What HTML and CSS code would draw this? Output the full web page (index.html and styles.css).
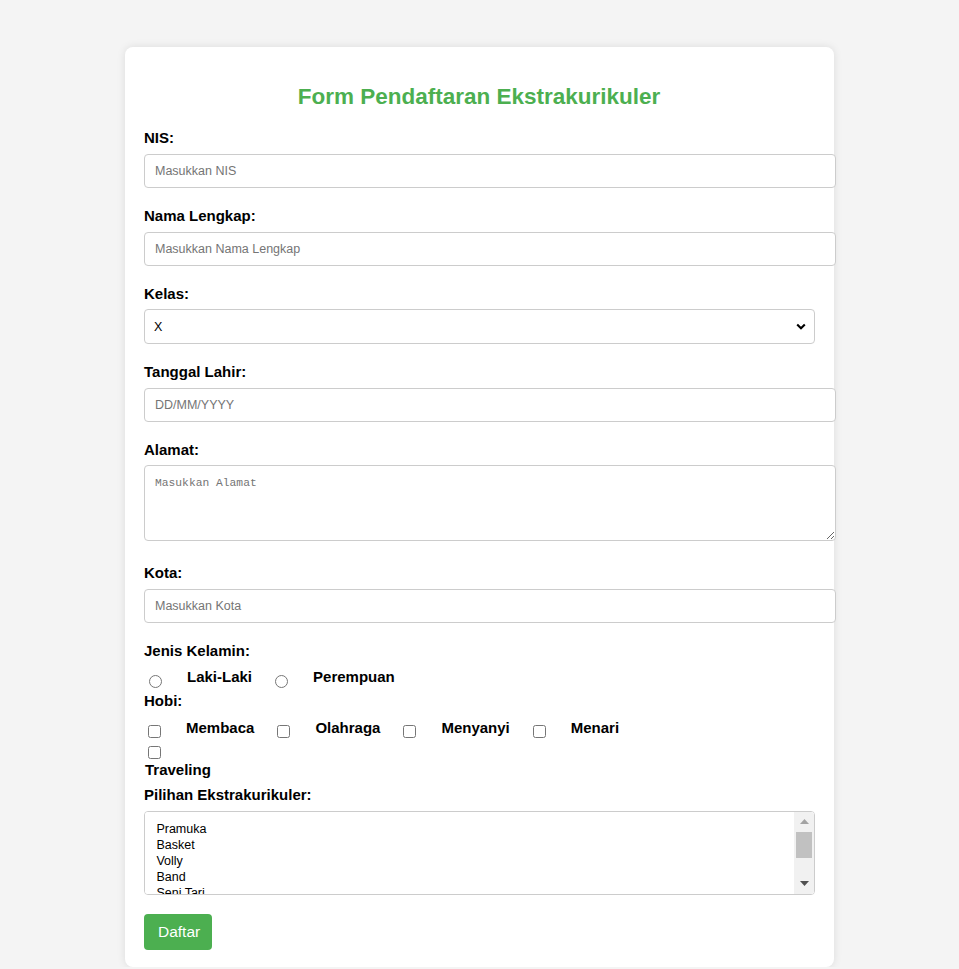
FILE: index.html
```html
<!DOCTYPE html>
<html lang="id">
<head>
<meta charset="utf-8">
<title>Form Pendaftaran Ekstrakurikuler</title>
<link rel="stylesheet" href="styles.css">
</head>
<body>
<div class="container">
  <h2 class="title">Form Pendaftaran Ekstrakurikuler</h2>
  <form class="form">
    <label class="field-label" for="nis">NIS:</label>
    <input class="text-input" type="text" id="nis" placeholder="Masukkan NIS">

    <label class="field-label" for="nama">Nama Lengkap:</label>
    <input class="text-input" type="text" id="nama" placeholder="Masukkan Nama Lengkap">

    <label class="field-label" for="kelas">Kelas:</label>
    <select class="select-input" id="kelas">
      <option>X</option>
      <option>XI</option>
      <option>XII</option>
    </select>

    <label class="field-label" for="tgl">Tanggal Lahir:</label>
    <input class="text-input" type="text" id="tgl" placeholder="DD/MM/YYYY">

    <label class="field-label" for="alamat">Alamat:</label>
    <textarea class="textarea-input" id="alamat" placeholder="Masukkan Alamat"></textarea>

    <label class="field-label" for="kota">Kota:</label>
    <input class="text-input" type="text" id="kota" placeholder="Masukkan Kota">

    <label class="field-label group-label">Jenis Kelamin:</label>
    <div class="choice-row radio-row">
      <input class="radio" type="radio" name="jk" id="jk1"><label class="choice-label" for="jk1">Laki-Laki</label>
      <input class="radio" type="radio" name="jk" id="jk2"><label class="choice-label" for="jk2">Perempuan</label>
    </div>

    <label class="field-label group-label">Hobi:</label>
    <div class="choice-row check-row">
      <input class="check" type="checkbox" id="h1"><label class="choice-label" for="h1">Membaca</label>
      <input class="check" type="checkbox" id="h2"><label class="choice-label" for="h2">Olahraga</label>
      <input class="check" type="checkbox" id="h3"><label class="choice-label" for="h3">Menyanyi</label>
      <input class="check" type="checkbox" id="h4"><label class="choice-label" for="h4">Menari</label>
    </div>
    <div class="choice-row check-row-wrap">
      <input class="check" type="checkbox" id="h5">
    </div>
    <label class="field-label wrap-label" for="h5">Traveling</label>

    <label class="field-label" for="ekskul">Pilihan Ekstrakurikuler:</label>
    <div class="list-wrap">
      <select class="list-input" id="ekskul" multiple size="5">
        <option>Pramuka</option>
        <option>Basket</option>
        <option>Volly</option>
        <option>Band</option>
        <option>Seni Tari</option>
        <option>Paskibra</option>
        <option>PMR</option>
      </select>
      <div class="fake-scrollbar" aria-hidden="true">
        <div class="sb-button">
          <svg class="sb-arrow" viewBox="0 0 9 5" width="9" height="5"><path d="M0 5 L4.5 0 L9 5 Z" fill="#a3a3a3"/></svg>
        </div>
        <div class="sb-track">
          <div class="sb-thumb"></div>
        </div>
        <div class="sb-button">
          <svg class="sb-arrow" viewBox="0 0 9 5" width="9" height="5"><path d="M0 0 L9 0 L4.5 5 Z" fill="#505050"/></svg>
        </div>
      </div>
    </div>

    <button class="submit-btn" type="button">Daftar</button>
  </form>
</div>
</body>
</html>
```

FILE: styles.css
```css
html, body {
  margin: 0;
  padding: 0;
}

body {
  background: #f4f4f4;
  font-family: "Liberation Sans", Arial, sans-serif;
  color: #000;
}

.container {
  width: 670px;
  margin: 47px auto 0;
  padding: 18.75px 20px 17px 19px;
  background: #fff;
  border-radius: 8px;
  box-shadow: 0 0 9px rgba(0, 0, 0, 0.1);
}

.title {
  margin: 18px 0 19.5px;
  text-align: center;
  color: #4caf50;
  font-size: 22.5px;
  font-weight: bold;
  line-height: 25.9px;
}

.form {
  display: block;
}

.field-label {
  display: block;
  font-size: 15px;
  font-weight: bold;
  line-height: 17.25px;
  margin-bottom: 7.5px;
}

.text-input {
  display: block;
  box-sizing: border-box;
  width: 692px;
  height: 34px;
  margin: 0 0 19px;
  padding: 0 10px;
  border: 1px solid #ccc;
  border-radius: 4px;
  font-family: "Liberation Sans", Arial, sans-serif;
  font-size: 12.5px;
  color: #000;
  background: #fff;
}

.text-input::placeholder {
  color: #757575;
}

.select-input {
  display: block;
  box-sizing: border-box;
  width: 671px;
  height: 34.5px;
  margin: 0 0 19px;
  padding: 0 9px;
  border: 1px solid #ccc;
  border-radius: 4px;
  font-family: "Liberation Sans", Arial, sans-serif;
  font-size: 12.5px;
  color: #000;
  -webkit-appearance: none;
  appearance: none;
  background-color: #fff;
  background-image: url("data:image/svg+xml,%3Csvg xmlns='http://www.w3.org/2000/svg' viewBox='0 0 10 7'%3E%3Cpath d='M1.2 1.4 L5 5.2 L8.8 1.4' fill='none' stroke='%23000' stroke-width='2.1'/%3E%3C/svg%3E");
  background-repeat: no-repeat;
  background-size: 10px 7px;
  background-position: right 8px center;
}

.textarea-input {
  display: block;
  box-sizing: border-box;
  width: 692px;
  height: 76px;
  margin: 0 0 22.5px;
  padding: 11px 10px 9px;
  border: 1px solid #ccc;
  border-radius: 4px;
  font-family: "Liberation Mono", monospace;
  font-size: 11.3px;
  line-height: 13px;
  resize: both;
}

.textarea-input::placeholder {
  color: #757575;
}

.choice-row {
  display: flex;
  align-items: flex-start;
}

.radio-row {
  margin-top: -0.5px;
  margin-bottom: 4px;
}

.radio {
  width: 13px;
  height: 13px;
  margin: 9.5px 3px 0 5px;
  flex: none;
}

.choice-label {
  font-size: 15px;
  font-weight: bold;
  line-height: 17.25px;
  margin: 2.5px 18px 0 22px;
}

.group-label {
  margin-bottom: 7.5px;
}

.check {
  width: 13px;
  height: 13px;
  margin: 8px 3px 0 4px;
  flex: none;
}

.check-row .choice-label {
  margin: 2px 19px 0 22px;
}

.check-row-wrap .check {
  margin-top: 8px;
}

.wrap-label {
  margin-top: 2px;
  margin-left: 1px;
  margin-bottom: 7.5px;
}

.list-wrap {
  position: relative;
  width: 671px;
  margin: 0 0 19.5px;
}

.list-input {
  display: block;
  box-sizing: border-box;
  width: 671px;
  height: 84px;
  margin: 0;
  padding: 10px 30px 8px 9.4px;
  border: 1px solid #ccc;
  border-radius: 4px;
  font-family: "Liberation Sans", Arial, sans-serif;
  font-size: 12.5px;
  color: #000;
  background: #fff;
  outline: none;
  scrollbar-width: none;
}

.list-input option {
  padding: 0 2px 1px;
  line-height: 15px;
}

.fake-scrollbar {
  position: absolute;
  top: 1px;
  right: 1px;
  bottom: 1px;
  width: 20px;
  display: flex;
  flex-direction: column;
  background: #f1f1f1;
  border-radius: 0 3px 3px 0;
  pointer-events: none;
}

.sb-button {
  flex: none;
  height: 20px;
  display: flex;
  align-items: center;
  justify-content: center;
}

.sb-arrow {
  display: block;
}

.sb-track {
  flex: 1;
  display: flex;
  flex-direction: column;
  padding: 0 2px;
}

.sb-thumb {
  height: 26px;
  background: #c1c1c1;
}

.submit-btn {
  display: block;
  box-sizing: border-box;
  height: 36px;
  padding: 0 12px 0 14px;
  border: none;
  border-radius: 4px;
  background: #4caf50;
  color: #fff;
  font-family: "Liberation Sans", Arial, sans-serif;
  font-size: 15.5px;
  cursor: pointer;
}
```
